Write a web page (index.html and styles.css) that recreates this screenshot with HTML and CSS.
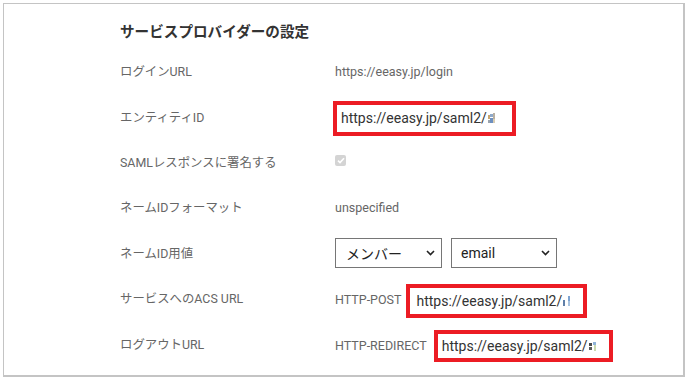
FILE: index.html
```html
<!DOCTYPE html>
<html lang="ja">
<head>
<meta charset="utf-8">
<title>サービスプロバイダーの設定</title>
<link rel="stylesheet" href="styles.css">
</head>
<body>
<div class="panel">
  <h2 class="title">サービスプロバイダーの設定</h2>
  <div class="rows">
    <div class="label">ログインURL</div>
    <div class="value"><span class="plain">https://eeasy.jp/login</span></div>

    <div class="label">エンティティID</div>
    <div class="value">
      <div class="mark mark-entity"><span class="url">https://eeasy.jp/saml2/</span><svg class="blur" width="8" height="12" viewBox="0 0 8 12"><rect x="0" y="3" width="2" height="4" fill="#c8a66e"/><rect x="2" y="2" width="3" height="3" fill="#8fa9c9"/><rect x="2" y="6" width="3" height="5" fill="#6d8fbf"/><rect x="5" y="1" width="2" height="6" fill="#b9b0a2"/><rect x="5" y="7" width="2" height="4" fill="#d9cdb3"/><rect x="0" y="8" width="2" height="3" fill="#9aa3ad"/></svg></div>
    </div>

    <div class="label">SAMLレスポンスに署名する</div>
    <div class="value">
      <span class="check"><svg width="8" height="7" viewBox="0 0 8 7"><path d="M1 3.6 L3 5.6 L7 1.2" fill="none" stroke="#ffffff" stroke-width="1.6"/></svg></span>
    </div>

    <div class="label">ネームIDフォーマット</div>
    <div class="value"><span class="plain">unspecified</span></div>

    <div class="label">ネームID用値</div>
    <div class="value selects">
      <div class="select select-a"><span>メンバー</span><svg width="9" height="6" viewBox="0 0 9 6"><path d="M1 1 L4.5 4.5 L8 1" fill="none" stroke="#222" stroke-width="1.6"/></svg></div>
      <div class="select select-b"><span>email</span><svg width="9" height="6" viewBox="0 0 9 6"><path d="M1 1 L4.5 4.5 L8 1" fill="none" stroke="#222" stroke-width="1.6"/></svg></div>
    </div>

    <div class="label">サービスへのACS URL</div>
    <div class="value">
      <span class="plain method method-post">HTTP-POST</span>
      <div class="mark mark-acs"><span class="url">https://eeasy.jp/saml2/</span><svg class="blur" width="8" height="12" viewBox="0 0 8 12"><rect x="0" y="5" width="2" height="6" fill="#5f7fa8"/><rect x="5" y="1" width="2" height="5" fill="#7da3d1"/><rect x="5" y="6" width="2" height="5" fill="#a9c4e0"/></svg></div>
    </div>

    <div class="label">ログアウトURL</div>
    <div class="value">
      <span class="plain method method-redirect">HTTP-REDIRECT</span>
      <div class="mark mark-logout"><span class="url">https://eeasy.jp/saml2/</span><svg class="blur" width="8" height="12" viewBox="0 0 8 12"><rect x="0" y="3" width="3" height="3" fill="#4a4a4a"/><rect x="0" y="7" width="3" height="3" fill="#5a5a5a"/><rect x="4" y="2" width="3" height="3" fill="#8fb3d9"/><rect x="5" y="5" width="2" height="6" fill="#c9d9b0"/></svg></div>
    </div>
  </div>
</div>
</body>
</html>
```

FILE: styles.css
```css
html, body {
  margin: 0;
  padding: 0;
  background: #ffffff;
}

body {
  font-family: Roboto, "Noto Sans CJK JP", sans-serif;
  color: #666666;
}

.panel {
  margin: 3px 0 0 3px;
  box-sizing: border-box;
  width: 682px;
  height: 374px;
  padding: 0 0 0 116px;
  border: 1px solid #c4c4c4;
  border-right-width: 2px;
  border-bottom-width: 2px;
  box-shadow: 0 1px 0 #e2e2e2;
}

.title {
  margin: 18px 0 6.5px 0;
  height: 20px;
  line-height: 20px;
  font-size: 14.6px;
  font-weight: 700;
  color: #333333;
}

.rows {
  display: grid;
  grid-template-columns: 215px auto;
  grid-auto-rows: 45.4px;
}

.label {
  display: flex;
  align-items: center;
  font-size: 12.4px;
  color: #666666;
  white-space: nowrap;
}

.value {
  display: flex;
  align-items: center;
  white-space: nowrap;
}

.plain {
  font-size: 12.5px;
  color: #666666;
}

.mark {
  display: flex;
  align-items: center;
  box-sizing: border-box;
  border: 4px solid #ec1c24;
  font-size: 14px;
  color: #333333;
  background: #ffffff;
}

.mark .url {
  line-height: 16px;
}

.mark .blur {
  margin-left: 1px;
}

.mark-entity {
  width: 183px;
  height: 35px;
  margin-left: -2px;
  margin-top: 3px;
  padding-left: 4px;
}

.mark-acs {
  width: 181px;
  height: 34px;
  margin-top: 6px;
  padding-left: 6px;
}

.mark-logout {
  width: 179px;
  height: 32px;
  margin-top: 4px;
  padding-left: 4px;
}

.method-post {
  margin-right: 5px;
  margin-top: 3px;
}

.method-redirect {
  margin-right: 7px;
  margin-top: 3px;
}

.check {
  display: flex;
  align-items: center;
  justify-content: center;
  width: 11px;
  height: 11px;
  border-radius: 2px;
  background: #d4d4d4;
  margin-top: -2px;
  margin-left: 0;
}

.selects {
  gap: 9px;
}

.select {
  display: flex;
  align-items: center;
  justify-content: space-between;
  box-sizing: border-box;
  height: 30px;
  border: 1px solid #767676;
  padding: 0 6px 0 10px;
  font-size: 14px;
  color: #222222;
  background: #ffffff;
}

.select-a {
  width: 107px;
}

.select-b {
  width: 106px;
  padding-left: 9px;
}
```
